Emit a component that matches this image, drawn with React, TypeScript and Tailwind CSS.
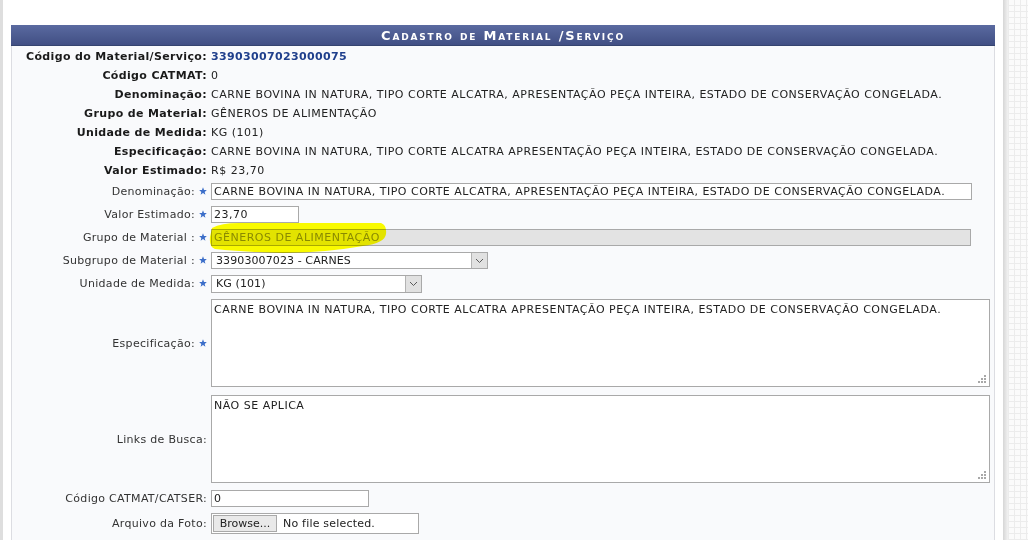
import React from "react";

function Star() {
  return (
    <svg width="8" height="8" viewBox="0 0 10 10" className="inline-block ml-[4px] align-baseline">
      <path
        d="M5 0.3 L6.3 3.6 L9.8 3.8 L7.1 6.1 L8 9.6 L5 7.6 L2 9.6 L2.9 6.1 L0.2 3.8 L3.7 3.6 Z"
        fill="#3d6fc9"
      />
    </svg>
  );
}

function Chevron() {
  return (
    <svg width="9" height="6" viewBox="0 0 9 6">
      <path d="M1 1 L4.5 4.5 L8 1" stroke="#5a5a5a" strokeWidth="1" fill="none" />
    </svg>
  );
}

function Grip() {
  const dots = [
    [6, 0],
    [3, 3],
    [6, 3],
    [0, 6],
    [3, 6],
    [6, 6],
  ];
  return (
    <svg width="8" height="8" className="absolute right-[3px] bottom-[3px]">
      {dots.map(([x, y], i) => (
        <rect key={i} x={x} y={y} width="2" height="2" fill="#a8a8a8" />
      ))}
    </svg>
  );
}

const info: [string, string, boolean?][] = [
  ["Código do Material/Serviço:", "33903007023000075", true],
  ["Código CATMAT:", "0"],
  [
    "Denominação:",
    "CARNE BOVINA IN NATURA, TIPO CORTE ALCATRA, APRESENTAÇÃO PEÇA INTEIRA, ESTADO DE CONSERVAÇÃO CONGELADA.",
  ],
  ["Grupo de Material:", "GÊNEROS DE ALIMENTAÇÃO"],
  ["Unidade de Medida:", "KG (101)"],
  [
    "Especificação:",
    "CARNE BOVINA IN NATURA, TIPO CORTE ALCATRA APRESENTAÇÃO PEÇA INTEIRA, ESTADO DE CONSERVAÇÃO CONGELADA.",
  ],
  ["Valor Estimado:", "R$ 23,70"],
];

function FormLabel({ text, star = true }: { text: string; star?: boolean }) {
  return (
    <div className="w-[195px] shrink-0 text-right tracking-[0.3px] text-[#333] whitespace-nowrap">
      {text}
      {star && <Star />}
    </div>
  );
}

export default function App() {
  return (
    <div className="flex h-[540px] w-[1028px] overflow-hidden bg-white font-['DejaVu_Sans',Verdana,sans-serif] text-[11px] leading-[13px] tracking-[0.5px] text-[#222]">
      <div className="w-[3px] shrink-0 bg-[#dedede]" />
      <div className="relative w-[1000px] shrink-0 bg-white px-[8px] pt-[25px]">
        <div className="flex h-[21px] items-center justify-center border-b border-[#35446f] bg-gradient-to-b from-[#5a6aa0] to-[#414f84] text-[13px] font-bold tracking-[1.8px] text-white [font-variant:small-caps]">
          Cadastro de Material /Serviço
        </div>
        <div className="border-x border-[#dcdde2] bg-[#f9fafc] pt-[1px] pb-[20px]">
          {info.map(([label, value, blue]) => (
            <div key={label} className="flex h-[19px] items-center">
              <div className="w-[195px] shrink-0 text-right font-bold tracking-[0.35px] text-[#1a1a1a] whitespace-nowrap">
                {label}
              </div>
              <div
                className={
                  "ml-[4px] whitespace-nowrap " +
                  (blue ? "font-bold tracking-[0.35px] text-[#1f3f8c]" : "text-[#222]")
                }
              >
                {value}
              </div>
            </div>
          ))}

          <div className="flex h-[23px] items-center">
            <FormLabel text="Denominação:" />
            <div className="ml-[4px] flex h-[17px] w-[761px] items-center border border-[#a9a9a9] bg-white px-[2px] whitespace-nowrap">
              CARNE BOVINA IN NATURA, TIPO CORTE ALCATRA, APRESENTAÇÃO PEÇA INTEIRA, ESTADO DE CONSERVAÇÃO CONGELADA.
            </div>
          </div>

          <div className="flex h-[23px] items-center">
            <FormLabel text="Valor Estimado:" />
            <div className="ml-[4px] flex h-[17px] w-[88px] items-center border border-[#a9a9a9] bg-white px-[2px]">
              23,70
            </div>
          </div>

          <div className="flex h-[23px] items-center">
            <FormLabel text="Grupo de Material :" />
            <div className="ml-[4px] flex h-[17px] w-[760px] items-center border border-[#a9a9a9] bg-[#e3e3e3] px-[2px] text-[#8a8a8a]">
              GÊNEROS DE ALIMENTAÇÃO
            </div>
          </div>

          <div className="flex h-[23px] items-center">
            <FormLabel text="Subgrupo de Material :" />
            <div className="ml-[4px] flex h-[17px] w-[277px] items-stretch border border-[#a9a9a9] bg-white">
              <div className="flex flex-1 items-center pl-[4px] tracking-[0.1px]">33903007023 - CARNES</div>
              <div className="flex w-[16px] items-center justify-center border-l border-[#b3b3b3] bg-[#e1e1e1]">
                <Chevron />
              </div>
            </div>
          </div>

          <div className="flex h-[23px] items-center">
            <FormLabel text="Unidade de Medida:" />
            <div className="ml-[4px] flex h-[18px] w-[211px] items-stretch border border-[#a9a9a9] bg-white">
              <div className="flex flex-1 items-center pl-[4px] tracking-[0.1px]">KG (101)</div>
              <div className="flex w-[16px] items-center justify-center border-l border-[#b3b3b3] bg-[#e1e1e1]">
                <Chevron />
              </div>
            </div>
          </div>

          <div className="flex items-center py-[4px]">
            <FormLabel text="Especificação:" />
            <div className="relative ml-[4px] h-[88px] w-[779px] border border-[#a9a9a9] bg-white px-[2px] pt-[3px] leading-[14px]">
              CARNE BOVINA IN NATURA, TIPO CORTE ALCATRA APRESENTAÇÃO PEÇA INTEIRA, ESTADO DE CONSERVAÇÃO CONGELADA.
              <Grip />
            </div>
          </div>

          <div className="flex items-center py-[4px]">
            <FormLabel text="Links de Busca:" star={false} />
            <div className="relative ml-[4px] h-[88px] w-[779px] border border-[#a9a9a9] bg-white px-[2px] pt-[3px] leading-[14px]">
              NÃO SE APLICA
              <Grip />
            </div>
          </div>

          <div className="flex h-[23px] items-center">
            <FormLabel text="Código CATMAT/CATSER:" star={false} />
            <div className="ml-[4px] flex h-[17px] w-[158px] items-center border border-[#a9a9a9] bg-white px-[2px]">
              0
            </div>
          </div>

          <div className="flex h-[26px] items-center">
            <FormLabel text="Arquivo da Foto:" star={false} />
            <div className="ml-[4px] flex h-[21px] w-[208px] items-center border border-[#a9a9a9] bg-white px-[1px]">
              <div className="flex h-[17px] w-[64px] items-center justify-center border border-[#a9a9a9] bg-[#e9e9e9] tracking-normal text-[#222]">
                Browse...
              </div>
              <div className="ml-[6px] tracking-[0.2px]">No file selected.</div>
            </div>
          </div>
        </div>

        <svg
          width="190"
          height="44"
          className="pointer-events-none absolute left-[200px] top-[216px] mix-blend-multiply"
        >
          <defs>
            <filter id="soft">
              <feGaussianBlur stdDeviation="0.7" />
            </filter>
          </defs>
          <path
            d="M9 12 Q18 7 36 7 L178 7 Q184 9 183 18 Q182 27 160 30 Q120 37 80 37 Q40 36 12 33 Q6 31 7 21 Z"
            fill="#ffff00"
            filter="url(#soft)"
          />
        </svg>
      </div>
      <div className="w-[5px] shrink-0 bg-gradient-to-r from-[#d6d6d6] to-[#f2f2f2]" />
      <div className="flex-1 bg-[#fbfbfb] bg-[image:repeating-linear-gradient(90deg,#ececec_0px,#ececec_1px,transparent_1px,transparent_6px),repeating-linear-gradient(0deg,#ececec_0px,#ececec_1px,transparent_1px,transparent_6px)]" />
    </div>
  );
}
